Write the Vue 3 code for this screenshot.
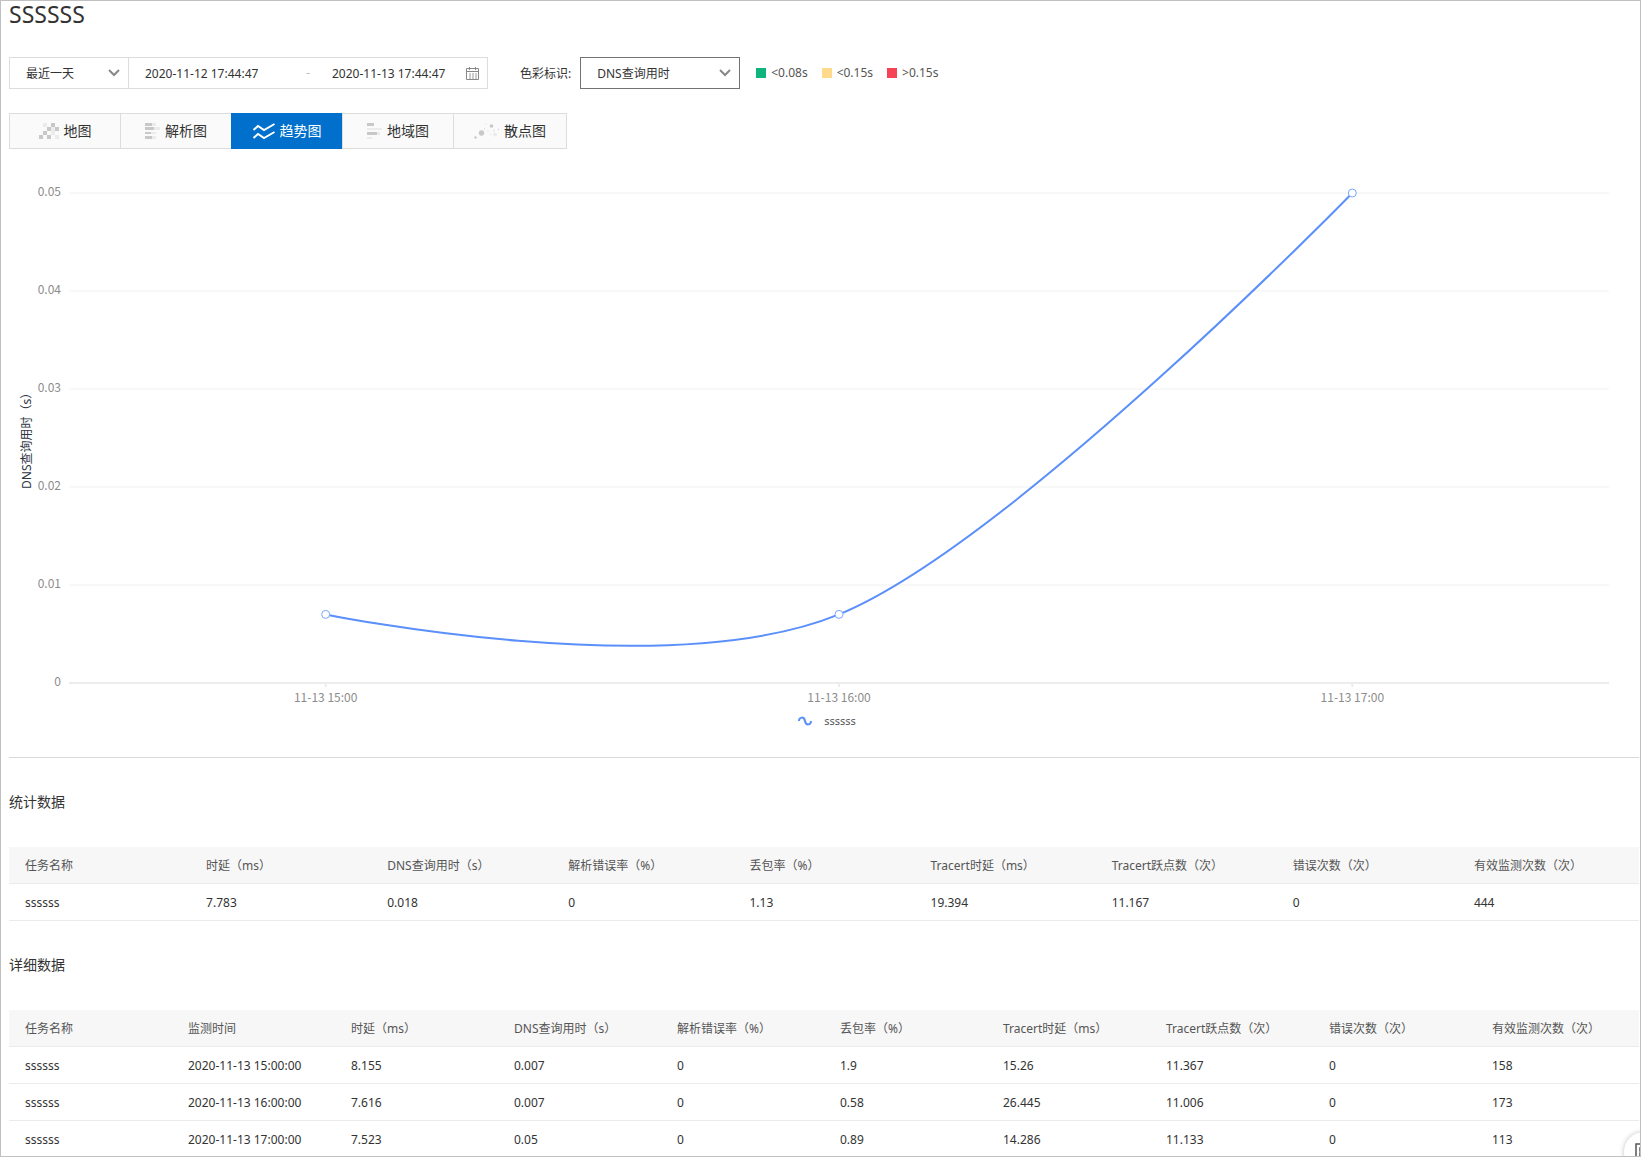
<template>
  <div class="page">
    <h1 class="page-title">SSSSSS</h1>

    <div class="filters">
      <div class="range">
        <div class="select-box range-preset">
          <select v-model="preset" aria-label="时间范围">
            <option v-for="item in presets" :key="item">{{ item }}</option>
          </select>
          <svg class="chevron" viewBox="0 0 12 8" aria-hidden="true"><path d="M1 1l5 5 5-5" /></svg>
        </div>
        <div class="range-dates">
          <input v-model="startTime" type="text" aria-label="开始时间" />
          <span class="dash">-</span>
          <input v-model="endTime" type="text" aria-label="结束时间" />
          <svg class="calendar" viewBox="0 0 13 13" aria-hidden="true">
            <path d="M.5 1.5h12v11H.5zM.5 4.500h12M3.500 0v3M9.500 0v3" />
            <path class="days" d="M3 7h2M6 7h2M9 7h2M3 9h2M6 9h2M9 9h2M3 11h2M6 11h2M9 11h2" />
          </svg>
        </div>
      </div>

      <label class="metric-label" for="metric">色彩标识:</label>
      <div class="select-box metric">
        <select id="metric" v-model="metric">
          <option v-for="item in metrics" :key="item">{{ item }}</option>
        </select>
        <svg class="chevron" viewBox="0 0 12 8" aria-hidden="true"><path d="M1 1l5 5 5-5" /></svg>
      </div>

      <ul class="levels">
        <li v-for="level in levels" :key="level.name">
          <span class="swatch" :class="level.name"></span>{{ level.text }}
        </li>
      </ul>
    </div>

    <div class="tabs">
      <button
        v-for="tab in tabs"
        :key="tab.key"
        type="button"
        class="tab"
        :class="{ active: tab.key === activeTab }"
        @click="activeTab = tab.key"
      >
        <svg v-if="tab.key === 'map'" width="20" height="16" aria-hidden="true">
          <path class="light" d="M4 0h4v4H4zM12 4h4v4h-4zM12 8h4v4h-4zM16 12h4v4h-4z" />
          <path class="dark" d="M12 0h4v4h-4zM8 4h4v4H8zM16 4h4v4h-4zM4 8h4v4H4zM0 12h4v4H0zM8 12h4v4H8z" />
        </svg>
        <svg v-else-if="tab.key === 'resolve'" width="15" height="16" aria-hidden="true">
          <path class="light" d="M7 0h4v3H7zM9 4h6v3H9zM6 9h5v2H6zM7 13h4v3H7z" />
          <path class="dark" d="M0 0h7v3H0zM0 4h9v3H0zM0 9h6v2H0zM0 13h7v3H0z" />
        </svg>
        <svg v-else-if="tab.key === 'trend'" width="22" height="16" aria-hidden="true">
          <path class="wave" d="M.5 7L5 3l6 4 10.500-6M.5 15L5 11l6 4 10.500-6" />
        </svg>
        <svg v-else-if="tab.key === 'region'" width="15" height="16" aria-hidden="true">
          <path class="light" d="M0 5h15v2H0zM10 9h3v3h-3zM0 14h5v2H0z" />
          <path class="dark" d="M0 0h7v3H0zM0 9h10v3H0z" />
        </svg>
        <svg v-else width="25" height="16" aria-hidden="true">
          <g class="dark">
            <circle cx="1.500" cy="14.500" r="1.200" />
            <circle cx="7.500" cy="10" r="2.700" />
            <circle cx="17.500" cy="3" r="1.800" />
            <circle cx="24.500" cy="6.500" r=".7" />
            <circle cx="10.500" cy="6" r=".6" />
          </g>
          <g class="light">
            <circle cx="12" cy="1" r=".8" />
            <circle cx="14" cy="8" r=".9" />
            <circle cx="20" cy="7.500" r="1.200" />
            <circle cx="16.500" cy="11.500" r=".9" />
            <circle cx="21" cy="11.500" r="2" />
          </g>
        </svg>
        <span>{{ tab.text }}</span>
      </button>
    </div>

    <div ref="chartEl" class="chart">
      <svg :width="chartWidth" :height="CHART_HEIGHT" role="img" aria-label="DNS查询用时">
        <text class="axis-title" :transform="`translate(22 ${PLOT.bottom - 194}) rotate(-90)`">DNS查询用时（s）</text>
        <g v-for="tick in yTicks" :key="tick.label">
          <line
            :class="tick.value === 0 ? 'axis' : 'grid'"
            :x1="PLOT.left"
            :x2="plotRight"
            :y1="tick.y"
            :y2="tick.y"
          />
          <text class="tick" text-anchor="end" :x="PLOT.left - 8" :y="tick.y + 3">{{ tick.label }}</text>
        </g>
        <g v-for="point in points" :key="point.label">
          <line class="axis-tick" :x1="point.x" :x2="point.x" :y1="PLOT.bottom + 1" :y2="PLOT.bottom + 4" />
          <text class="tick" text-anchor="middle" :x="point.x" :y="PLOT.bottom + 19">{{ point.label }}</text>
        </g>
        <path class="line" :d="linePath" />
        <circle v-for="point in points" :key="point.label" class="dot" :cx="point.x" :cy="point.y" r="4" />
      </svg>
      <div class="legend">
        <svg width="14" height="10" aria-hidden="true"><path d="M1 5C1 1 6 0 7 5s6 4 6 0" /></svg>
        <span>ssssss</span>
      </div>
    </div>

    <section v-for="block in blocks" :key="block.title" class="block">
      <h2>{{ block.title }}</h2>
      <table>
        <thead>
          <tr>
            <th v-for="column in block.columns" :key="column" scope="col">{{ column }}</th>
          </tr>
        </thead>
        <tbody>
          <tr v-for="(row, i) in block.rows" :key="i">
            <td v-for="(cell, j) in row" :key="j">{{ cell }}</td>
          </tr>
        </tbody>
      </table>
    </section>

    <button type="button" class="float-button" aria-label="快捷入口">
      <svg width="18" height="18" aria-hidden="true">
        <path d="M1 1h16v16H1zM5 5h3v3H5zM10 5h3v3h-3zM5 10h3v3H5zM10 10h3v3h-3z" />
      </svg>
    </button>
  </div>
</template>

<script setup>
import { computed, onBeforeUnmount, onMounted, ref } from 'vue';

// --- FILTERS ---
const presets = ['最近一天', '最近三天', '最近一周'];
const preset = ref(presets[0]);
const startTime = ref('2020-11-12 17:44:47');
const endTime = ref('2020-11-13 17:44:47');

const metrics = ['DNS查询用时', '时延', '丢包率'];
const metric = ref(metrics[0]);

const levels = [
  { name: 'good', text: '<0.08s' },
  { name: 'warn', text: '<0.15s' },
  { name: 'bad', text: '>0.15s' },
];

const tabs = [
  { key: 'map', text: '地图' },
  { key: 'resolve', text: '解析图' },
  { key: 'trend', text: '趋势图' },
  { key: 'region', text: '地域图' },
  { key: 'scatter', text: '散点图' },
];
const activeTab = ref('trend');

// --- CHART ---
const CHART_HEIGHT = 560;
const PLOT = { left: 60, top: 44, bottom: 534, marginRight: 30 };
const Y_MAX = 0.05;

const series = [
  { label: '11-13 15:00', value: 0.007 },
  { label: '11-13 16:00', value: 0.007 },
  { label: '11-13 17:00', value: 0.05 },
];

const chartEl = ref(null);
const chartWidth = ref(1630);
const plotRight = computed(() => chartWidth.value - PLOT.marginRight);

const scaleY = (value) => PLOT.bottom - (value / Y_MAX) * (PLOT.bottom - PLOT.top);

const yTicks = [0, 0.01, 0.02, 0.03, 0.04, 0.05].map((value) => ({
  value,
  label: String(value),
  y: scaleY(value),
}));

// Each point sits in the middle of its own band
const points = computed(() => {
  const band = (plotRight.value - PLOT.left) / series.length;
  return series.map((item, i) => ({
    label: item.label,
    x: PLOT.left + band * (i + 0.5),
    y: scaleY(item.value),
  }));
});

// Catmull-Rom spline as bezier segments, the two end points have no tangent
const linePath = computed(() => {
  const p = points.value;
  const tangent = (i) =>
    i === 0 || i === p.length - 1
      ? { x: 0, y: 0 }
      : { x: (p[i + 1].x - p[i - 1].x) / 6, y: (p[i + 1].y - p[i - 1].y) / 6 };

  let d = `M${p[0].x} ${p[0].y}`;
  for (let i = 1; i < p.length; i++) {
    const a = tangent(i - 1);
    const b = tangent(i);
    d += ` C${p[i - 1].x + a.x} ${p[i - 1].y + a.y} ${p[i].x - b.x} ${p[i].y - b.y} ${p[i].x} ${p[i].y}`;
  }
  return d;
});

const measure = () => {
  chartWidth.value = chartEl.value.clientWidth;
};
onMounted(() => {
  measure();
  window.addEventListener('resize', measure);
});
onBeforeUnmount(() => window.removeEventListener('resize', measure));

// --- TABLES ---
const valueColumns = [
  '时延（ms）',
  'DNS查询用时（s）',
  '解析错误率（%）',
  '丢包率（%）',
  'Tracert时延（ms）',
  'Tracert跃点数（次）',
  '错误次数（次）',
  '有效监测次数（次）',
];

const blocks = [
  {
    title: '统计数据',
    columns: ['任务名称', ...valueColumns],
    rows: [['ssssss', '7.783', '0.018', '0', '1.13', '19.394', '11.167', '0', '444']],
  },
  {
    title: '详细数据',
    columns: ['任务名称', '监测时间', ...valueColumns],
    rows: [
      ['ssssss', '2020-11-13 15:00:00', '8.155', '0.007', '0', '1.9', '15.26', '11.367', '0', '158'],
      ['ssssss', '2020-11-13 16:00:00', '7.616', '0.007', '0', '0.58', '26.445', '11.006', '0', '173'],
      ['ssssss', '2020-11-13 17:00:00', '7.523', '0.05', '0', '0.89', '14.286', '11.133', '0', '113'],
    ],
  },
];
</script>

<style>
body {
  margin: 0;
  background: #fff;
}
</style>

<style scoped>
.page {
  position: relative;
  box-sizing: border-box;
  height: 100vh;
  padding: 0 1px 0 8px;
  border: 1px solid #c0c0c0;
  overflow: hidden;
  color: #333;
  font: 12px/20px "Noto Sans", "Noto Sans CJK SC", sans-serif;
}

.page-title {
  margin: 0 0 30px;
  font-size: 23px;
  font-weight: 400;
  line-height: 26px;
}

/* Filter row */
.filters {
  display: flex;
  align-items: center;
  height: 32px;
}

.range {
  display: flex;
  box-sizing: border-box;
  width: 479px;
  height: 32px;
  border: 1px solid #ddd;
}

.select-box {
  display: grid;
  align-items: center;
  box-sizing: border-box;
}

.select-box select,
.select-box .chevron {
  grid-area: 1 / 1;
}

select,
input {
  box-sizing: border-box;
  height: 30px;
  margin: 0;
  padding: 0;
  border: 0;
  outline: 0;
  background: transparent;
  color: inherit;
  font: inherit;
}

select {
  width: 100%;
  padding: 2px 0 0 16px;
  appearance: none;
}

.chevron {
  justify-self: end;
  width: 12px;
  height: 8px;
  margin-right: 8px;
  fill: none;
  stroke: #888;
  stroke-width: 2;
  pointer-events: none;
}

.range-preset {
  width: 119px;
  border-right: 1px solid #ddd;
}

.range-dates {
  display: flex;
  flex: 1;
  align-items: center;
  padding: 0 8px 0 16px;
}

.range-dates input {
  width: 126px;
}

.dash {
  flex: 1;
  padding-right: 6px;
  text-align: right;
  color: #bbb;
}

.range-dates .dash + input {
  margin-left: 16px;
}

.calendar {
  width: 13px;
  height: 13px;
  margin-left: 8px;
  fill: none;
  stroke: #888;
}

.calendar .days {
  stroke: #999;
}

.metric-label {
  margin: 0 9px 0 32px;
  padding-top: 2px;
}

.metric {
  width: 160px;
  height: 32px;
  border: 1px solid #737373;
}

.levels {
  display: flex;
  gap: 14px;
  margin: 0;
  padding: 0 0 0 16px;
  list-style: none;
  color: #555;
}

.levels li {
  display: flex;
  align-items: center;
}

.swatch {
  width: 10px;
  height: 10px;
  margin-right: 5px;
}

.good {
  background: #0fb37c;
}

.warn {
  background: #ffd98c;
}

.bad {
  background: #f54256;
}

/* View switcher */
.tabs {
  display: flex;
  margin-top: 24px;
}

.tab {
  display: flex;
  align-items: center;
  justify-content: center;
  gap: 5px;
  box-sizing: border-box;
  min-width: 112px;
  height: 36px;
  margin: 0 -1px 0 0;
  padding: 0 20px;
  border: 1px solid #ddd;
  background: #fafafa;
  color: #333;
  font: inherit;
  font-size: 14px;
  cursor: pointer;
}

.tab.active {
  border-color: #0070cc;
  background: #0070cc;
  color: #fff;
}

.tab .dark {
  fill: #c8c8c8;
}

.tab .light {
  fill: #ebebeb;
}

.tab .wave {
  fill: none;
  stroke: currentColor;
  stroke-width: 2;
}

/* Trend chart */
.chart {
  height: 608px;
  border-bottom: 1px solid #d9d9d9;
}

.chart > svg {
  display: block;
}

.grid {
  stroke: #f8f8f8;
  stroke-width: 2;
}

.axis,
.axis-tick {
  stroke: #ececec;
  stroke-width: 2;
}

.tick {
  fill: #8c8c8c;
  font-family: "Noto Sans CJK SC", sans-serif;
}

.axis-title {
  fill: #2c3542;
}

.line {
  fill: none;
  stroke: #5b8ff9;
  stroke-width: 2;
}

.dot {
  fill: #fff;
  stroke: #7ba5fa;
}

.legend {
  display: flex;
  align-items: center;
  justify-content: center;
  gap: 12px;
  height: 24px;
  padding-left: 6px;
  color: #555;
  font-size: 11px;
}

.legend path {
  fill: none;
  stroke: #5b8ff9;
  stroke-width: 2;
}

/* Data tables */
.block h2 {
  margin: 34px 0 35px;
  font-size: 14px;
  font-weight: 400;
  line-height: 20px;
}

table {
  width: 100%;
  border-collapse: separate;
  border-spacing: 0;
  table-layout: fixed;
}

th,
td {
  height: 34px;
  padding: 2px 0 0 16px;
  border-bottom: 1px solid #ebebeb;
  text-align: left;
  white-space: nowrap;
}

th {
  background: #f7f7f7;
  color: #555;
  font-weight: 400;
}

.float-button {
  position: absolute;
  right: -24px;
  bottom: -16px;
  display: grid;
  place-items: center;
  width: 40px;
  height: 40px;
  padding: 0;
  border: 0;
  border-radius: 50%;
  background: #fff;
  box-shadow: 0 0 5px rgba(0, 0, 0, 0.25);
}

.float-button path {
  fill: none;
  stroke: #555;
  stroke-width: 1.5;
}
</style>
